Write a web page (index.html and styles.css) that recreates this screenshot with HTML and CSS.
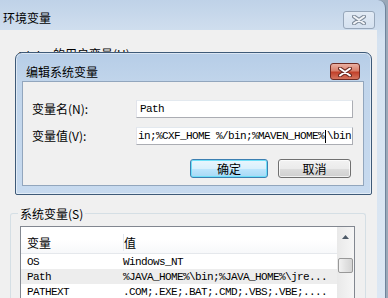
FILE: index.html
```html
<!DOCTYPE html>
<html lang="zh-CN">
  <head>
    <meta charset="UTF-8" />
    <title>环境变量</title>
    <link rel="stylesheet" href="styles.css">
  </head>
  <body>
    <div class="window">
      <div class="titlebar">
        <span class="title">环境变量</span>
        <span class="close-btn inactive">
          <svg width="14" height="10" viewBox="0 0 14 10">
            <path d="M2 1.5 L12 8.5 M12 1.5 L2 8.5" stroke="#7f8c9b" stroke-width="4" stroke-linecap="round" />
            <path d="M2 1.5 L12 8.5 M12 1.5 L2 8.5" stroke="#f3f5f8" stroke-width="2" stroke-linecap="round" />
          </svg>
        </span>
      </div>

      <div class="frame">
        <div class="client">
          <p class="user-label"><span class="mono">Admin </span>的用户变量(U)</p>

          <fieldset class="group">
            <legend>系统变量(S)</legend>
            <div class="listview">
              <div class="list-main">
                <div class="list-header">
                  <span class="col-name">变量</span>
                  <span class="col-value">值</span>
                </div>
                <div class="row">
                  <span class="col-name">OS</span>
                  <span class="col-value">Windows_NT</span>
                </div>
                <div class="row selected">
                  <span class="col-name">Path</span>
                  <span class="col-value">%JAVA_HOME%\bin;%JAVA_HOME%\jre...</span>
                </div>
                <div class="row">
                  <span class="col-name">PATHEXT</span>
                  <span class="col-value">.COM;.EXE;.BAT;.CMD;.VBS;.VBE;....</span>
                </div>
              </div>
              <div class="scrollbar">
                <div class="scroll-arrow">
                  <svg width="7" height="4" viewBox="0 0 7 4"><path d="M0 4 L3.5 0 L7 4 Z" fill="#4d5a68" /></svg>
                </div>
                <div class="scroll-thumb"></div>
              </div>
            </div>
          </fieldset>

          <!-- modal dialog on top of the user variables -->
          <div class="dialog">
            <div class="dialog-titlebar">
              <span class="title">编辑系统变量</span>
              <span class="close-btn active">
                <svg width="14" height="10" viewBox="0 0 14 10">
                  <path d="M2 1.5 L12 8.5 M12 1.5 L2 8.5" stroke="#6b2a22" stroke-width="4" stroke-linecap="round" />
                  <path d="M2 1.5 L12 8.5 M12 1.5 L2 8.5" stroke="#ffffff" stroke-width="2" stroke-linecap="round" />
                </svg>
              </span>
            </div>
            <div class="dialog-panel">
              <div class="form-grid">
                <label for="varName">变量名(N):</label>
                <div class="field" id="varName"><span class="mono">Path</span></div>
                <label for="varValue">变量值(V):</label>
                <div class="field scrolled" id="varValue">
                  <span class="mono">in;%CXF_HOME %/bin;%MAVEN_HOME%</span><span class="caret"></span><span class="mono">\bin</span>
                </div>
              </div>
              <div class="buttons">
                <button class="btn default">确定</button>
                <button class="btn">取消</button>
              </div>
            </div>
          </div>
        </div>
      </div>
    </div>
  </body>
</html>
```

FILE: styles.css
```css
html,
body {
  margin: 0;
  padding: 0;
}

body {
  width: 388px;
  height: 298px;
  overflow: hidden;
  background-color: #9aa8b8;
  font-family: "Noto Sans CJK SC", "Noto Sans", sans-serif;
  font-size: 12px;
  color: #000;
}

.mono {
  font-family: "Liberation Mono", "Noto Sans CJK SC", monospace;
  font-size: 11px;
  letter-spacing: -0.6px;
}

.window {
  width: 385px;
  height: 298px;
  display: flex;
  flex-direction: column;
  border-top-right-radius: 8px;
  border-right: 1px solid #6f849c;
  background: linear-gradient(#bfd2e8, #d5e2f0 40px, #dce7f3);
}

.titlebar {
  height: 30px;
  display: flex;
  justify-content: space-between;
  align-items: flex-start;
  padding-left: 3px;
  box-sizing: border-box;
}

.titlebar .title {
  line-height: 14px;
  margin-top: 11px;
}

.close-btn {
  display: flex;
  align-items: center;
  justify-content: center;
  box-sizing: border-box;
  border-radius: 3px;
}

.close-btn.inactive {
  width: 32px;
  height: 18px;
  margin-top: 11px;
  margin-right: 10px;
  border: 1px solid #97a7ba;
  background: linear-gradient(rgba(255, 255, 255, 0.5), rgba(255, 255, 255, 0.15));
}

.close-btn.active {
  width: 30px;
  height: 17px;
  margin-top: 10px;
  margin-right: 11px;
  border: 1px solid #6e2b23;
  background: linear-gradient(#eab0a2, #d8806c 45%, #c2412a 55%, #d4745e);
}

.frame {
  flex: 1;
  display: flex;
  min-height: 0;
}

.client {
  width: 377px;
  position: relative;
  background-color: #f0f0f0;
  overflow: hidden;
}

.user-label {
  margin: 16px 0 0 17px;
  line-height: 15px;
}

.group {
  margin: 142px 11px 0 10px;
  padding: 5px 10px 0 9px;
  border: 1px solid #d5dfe5;
  border-bottom: none;
  border-radius: 3px 3px 0 0;
}

.group legend {
  padding: 0 2px;
  margin-left: -2px;
  line-height: 15px;
}

.listview {
  display: flex;
  border: 1px solid #828790;
  border-bottom: none;
  background-color: #fff;
  height: 75px;
}

.list-main {
  flex: 1;
}

.list-header {
  height: 27px;
  display: flex;
  align-items: center;
  padding-top: 4px;
  box-sizing: border-box;
  background: linear-gradient(#fff, #fff 50%, #f7f8fa);
  border-bottom: 1px solid #e5e8ec;
}

.list-header .col-name {
  border-right: 1px solid #e3e8ee;
}

.col-name {
  width: 96px;
  padding-left: 6px;
  flex-shrink: 0;
}

.row {
  height: 15px;
  display: flex;
  align-items: center;
  font-family: "Liberation Mono", monospace;
  font-size: 11px;
  letter-spacing: -0.6px;
  white-space: nowrap;
}

.row.selected {
  background-color: #ededed;
}

.scrollbar {
  width: 17px;
  background: linear-gradient(90deg, #e9e9e9, #f6f6f6);
  display: flex;
  flex-direction: column;
  align-items: center;
}

.scroll-arrow {
  width: 17px;
  height: 17px;
  display: flex;
  align-items: center;
  justify-content: center;
  padding-top: 2px;
  box-sizing: border-box;
}

.scroll-thumb {
  width: 15px;
  height: 15px;
  margin-top: 14px;
  box-sizing: border-box;
  border: 1px solid #989898;
  border-radius: 2px;
  background: linear-gradient(90deg, #f2f2f2, #e2e2e2 50%, #d4d4d4);
}

.dialog {
  position: absolute;
  left: 15px;
  top: 22px;
  width: 357px;
  height: 143px;
  box-sizing: border-box;
  display: flex;
  flex-direction: column;
  border: 1px solid #3e5a78;
  border-radius: 7px 7px 2px 2px;
  background: linear-gradient(#b6cde7, #c1d5eb 30px, #c7daef);
  box-shadow: inset 0 0 0 1px rgba(255, 255, 255, 0.5);
}

.dialog-titlebar {
  height: 29px;
  display: flex;
  justify-content: space-between;
  align-items: flex-start;
  padding-left: 10px;
}

.dialog-titlebar .title {
  line-height: 14px;
  margin-top: 12px;
}

.dialog-panel {
  flex: 1;
  margin: 0 7px 8px 6px;
  padding: 18px 10px 7px 9px;
  background-color: #f0f0f0;
  border: 1px solid #92a6bd;
  display: flex;
  flex-direction: column;
}

.form-grid {
  display: grid;
  grid-template-columns: 104px 1fr;
  grid-auto-rows: 18px;
  row-gap: 9px;
  align-items: center;
}

.form-grid label {
  line-height: 14px;
}

.field {
  height: 18px;
  box-sizing: border-box;
  border: 1px solid #abadb3;
  border-top-color: #e3e9ef;
  border-left-color: #e2e3ea;
  background-color: #fff;
  display: flex;
  align-items: center;
  padding: 0 3px;
  white-space: nowrap;
  overflow: hidden;
}

.field.scrolled {
  padding: 0 1px;
}

.caret {
  display: inline-block;
  width: 1px;
  height: 13px;
  background-color: #000;
  margin: 0 1px;
  flex-shrink: 0;
}

.buttons {
  display: flex;
  justify-content: flex-end;
  gap: 10px;
  margin-top: 14px;
  margin-right: 2px;
}

.btn {
  height: 19px;
  width: 73px;
  padding: 0;
  font-family: "Noto Sans CJK SC", sans-serif;
  font-size: 12px;
  line-height: 14px;
  color: #000;
  border: 1px solid #707070;
  border-radius: 3px;
  background: linear-gradient(#f2f2f2, #ebebeb 50%, #dddddd 51%, #cfcfcf);
  box-shadow: inset 0 0 0 1px rgba(255, 255, 255, 0.7);
}

.btn.default {
  width: 78px;
  border-color: #3c7fb1;
  background: linear-gradient(#eaf6fd, #d9f0fc 50%, #bee6fd 51%, #a7d9f5);
  box-shadow: inset 0 0 0 1px #6ee0f8;
}
```
